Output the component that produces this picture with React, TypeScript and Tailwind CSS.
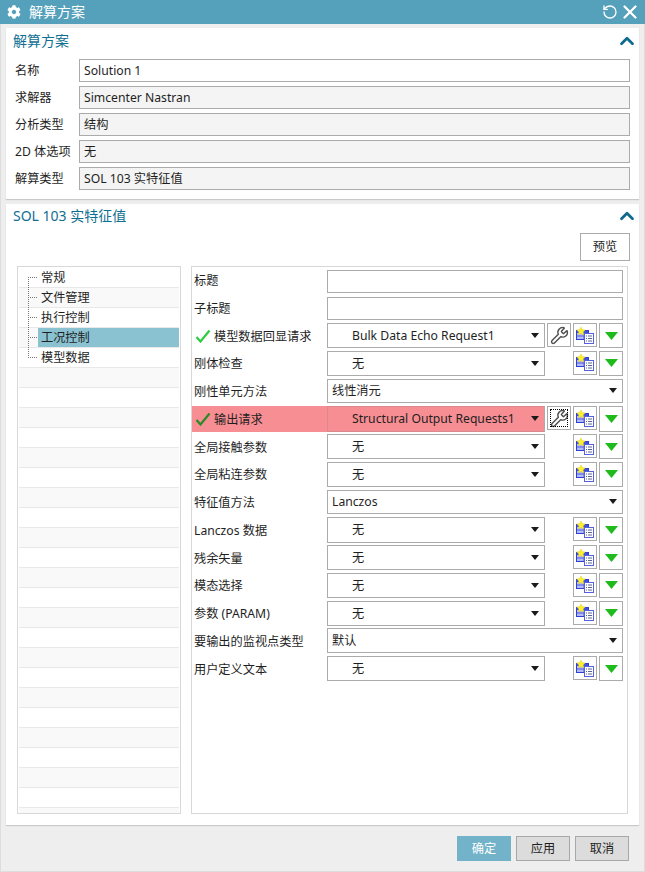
import type { ReactNode } from "react";
import { RotateCcw, X, ChevronUp, Wrench } from "lucide-react";
import { FaCog } from "react-icons/fa";

const font = "font-['Noto_Sans','Noto_Sans_CJK_SC',sans-serif]";

function Caret() {
  return (
    <svg width="8" height="5" viewBox="0 0 8 5" className="shrink-0">
      <path d="M0 0H8L4 5Z" fill="#1a1a1a" />
    </svg>
  );
}

function ItemIcon() {
  return (
    <svg width="18" height="17" viewBox="0 0 18 17">
      <rect x="0.500" y="3.500" width="12" height="9" fill="#b4bcf4" stroke="#2f3fd6" />
      <rect x="1" y="4" width="11" height="2" fill="#4050e0" />
      <path d="M1 9H12M8 6V12" stroke="#4f5ce4" strokeWidth="1" />
      <path d="M5 0l1.400 2.600 2.900.4-2.100 2 .5 2.900L5 6.500 2.300 7.900l.5-2.900-2.100-2 2.900-.4Z" fill="#faf02c" stroke="#d9c22a" strokeWidth="0.400" />
      <rect x="8.500" y="6.500" width="9" height="10" fill="#ffffff" stroke="#5560e2" />
      <path d="M10 9h1M12 9h4M10 11.500h1M12 11.500h4M10 14h1M12 14h4" stroke="#5a648c" strokeWidth="1" />
    </svg>
  );
}

function SquareBtn({ children, dotted, tall }: { children: ReactNode; dotted?: boolean; tall?: boolean }) {
  return (
    <div className={`relative ml-[2px] flex w-[24px] shrink-0 items-center justify-center border border-[#ababab] bg-white ${tall ? "h-[25.4px]" : "h-[24px]"}`}>
      {dotted && <div className="absolute inset-[2px] border border-dotted border-black" />}
      {children}
    </div>
  );
}

function Check({ dark }: { dark?: boolean }) {
  return (
    <svg width="16" height="14" viewBox="0 0 16 14" className="ml-[1px] mr-[3px] shrink-0">
      <path d="M1.500 8L5.500 12.500L14.500 1.500" fill="none" stroke={dark ? "#2a8a28" : "#2ecc40"} strokeWidth="2.200" />
    </svg>
  );
}

type Row = {
  label: string;
  value?: string;
  kind: "text" | "select" | "full";
  check?: boolean;
  wrench?: boolean;
  hot?: boolean;
};

const rows: Row[] = [
  { label: "标题", kind: "text" },
  { label: "子标题", kind: "text" },
  { label: "模型数据回显请求", value: "Bulk Data Echo Request1", kind: "select", check: true, wrench: true },
  { label: "刚体检查", value: "无", kind: "select" },
  { label: "刚性单元方法", value: "线性消元", kind: "full" },
  { label: "输出请求", value: "Structural Output Requests1", kind: "select", check: true, wrench: true, hot: true },
  { label: "全局接触参数", value: "无", kind: "select" },
  { label: "全局粘连参数", value: "无", kind: "select" },
  { label: "特征值方法", value: "Lanczos", kind: "full" },
  { label: "Lanczos 数据", value: "无", kind: "select" },
  { label: "残余矢量", value: "无", kind: "select" },
  { label: "模态选择", value: "无", kind: "select" },
  { label: "参数 (PARAM)", value: "无", kind: "select" },
  { label: "要输出的监视点类型", value: "默认", kind: "full" },
  { label: "用户定义文本", value: "无", kind: "select" },
];

const fields = [
  { label: "名称", value: "Solution 1", white: true },
  { label: "求解器", value: "Simcenter Nastran" },
  { label: "分析类型", value: "结构" },
  { label: "2D 体选项", value: "无" },
  { label: "解算类型", value: "SOL 103 实特征值" },
];

const tree = ["常规", "文件管理", "执行控制", "工况控制", "模型数据"];

function FormRow({ r }: { r: Row }) {
  return (
    <div className="flex h-[27.75px] shrink-0 items-start">
      <div className={`flex h-[25.4px] w-[135px] shrink-0 items-center pl-[2px] ${r.hot ? "bg-[#f78e93]" : ""}`}>
        {r.check && <Check dark={r.hot} />}
        <span className="whitespace-nowrap pt-[2px]">{r.label}</span>
      </div>
      {r.kind === "text" && <div className="mt-[2.200px] h-[23px] w-[296px] border border-[#ababab] bg-white" />}
      {r.kind === "full" && (
        <div className="flex h-[24.4px] w-[296px] items-center justify-between border border-[#ababab] bg-white pl-[4px] pr-[5px]">
          <span className="pt-[1px]">{r.value}</span>
          <Caret />
        </div>
      )}
      {r.kind === "select" && (
        <>
          <div className={`flex h-[25.4px] w-[218px] shrink-0 items-center justify-between border pl-[24px] pr-[5px] ${r.hot ? "border-[#d98a8e] border-r-[#ababab] bg-[#f78e93]" : "border-[#ababab] bg-white"}`}>
            <span className="whitespace-nowrap pt-[1px]">{r.value}</span>
            <Caret />
          </div>
          {r.wrench ? (
            <SquareBtn dotted={r.hot}>
              <Wrench size={19} strokeWidth={1.800} color="#505050" />
            </SquareBtn>
          ) : (
            <div className="ml-[2px] w-[24px] shrink-0" />
          )}
          <SquareBtn>
            <ItemIcon />
          </SquareBtn>
          <SquareBtn tall>
            <svg width="13" height="8" viewBox="0 0 13 8">
              <path d="M0 0H13L6.500 8Z" fill="#1fbb1c" />
            </svg>
          </SquareBtn>
        </>
      )}
    </div>
  );
}

export default function App() {
  return (
    <div className={`${font} flex h-[872px] w-[645px] flex-col overflow-hidden bg-[#eeeeee] text-[12.2px] leading-none text-[#1f1f1f]`}>
      <header className="flex h-[24px] shrink-0 items-center bg-[#55a0ba] pl-[7px] pr-[4px] text-white">
        <FaCog size={14} />
        <span className="ml-[8px] text-[14px]">解算方案</span>
        <RotateCcw size={16} strokeWidth={2} className="ml-auto" />
        <X size={22} strokeWidth={2.500} className="ml-[1px]" />
      </header>

      <div className="flex flex-1 flex-col border-x border-b border-[#dddddd]">
        <section className="mx-[5px] mt-[4px] h-[171px] shrink-0 bg-white pl-[7px] pr-[9px] shadow-[0_1px_1px_#c8c8c8]">
          <div className="flex h-[31px] items-center justify-between pb-[6px] text-[14px] text-[#0f6f92]">
            <span>解算方案</span>
            <ChevronUp size={22} strokeWidth={3} color="#0e6a8e" className="mr-[-8px]" />
          </div>
          <div className="flex flex-col gap-[4px]">
            {fields.map((f) => (
              <div key={f.label} className="flex h-[23px] items-center">
                <span className="w-[66px] shrink-0 pl-[2px] pt-[1px]">{f.label}</span>
                <div className={`flex h-full flex-1 items-center border border-[#ababab] pl-[4px] pt-[1px] ${f.white ? "bg-white" : "bg-[#f4f4f4]"}`}>
                  {f.value}
                </div>
              </div>
            ))}
          </div>
        </section>

        <section className="mx-[5px] mt-[5px] flex h-[621px] shrink-0 flex-col bg-white pl-[7px] pr-[9px] shadow-[0_1px_1px_#c8c8c8]">
          <div className="flex h-[24px] shrink-0 items-center justify-between text-[14px] text-[#0f6f92]">
            <span>SOL 103 实特征值</span>
            <ChevronUp size={22} strokeWidth={3} color="#0e6a8e" className="mr-[-8px]" />
          </div>
          <div className="mt-[5px] flex h-[28px] shrink-0 justify-end">
            <div className="flex w-[50px] items-center justify-center border border-[#ababab] bg-white">预览</div>
          </div>
          <div className="ml-[4px] mt-[5px] flex h-[548px] shrink-0">
            <div className="relative flex h-full w-[164px] shrink-0 flex-col overflow-hidden border border-[#d8d8d8] p-[1px]">
              {Array.from({ length: 28 }).map((_, i) => (
                <div key={i} className={`flex h-[20px] shrink-0 items-center border-b border-[#e8e8e8] pl-[19px] ${i % 2 ? "bg-[#f9f9f9]" : "bg-white"}`}>
                  {tree[i] && (
                    <span className={`flex h-full flex-1 items-center pl-[3px] pt-[1px] ${i === 3 ? "bg-[#8ac2d2]" : ""}`}>{tree[i]}</span>
                  )}
                </div>
              ))}
              <div className="absolute left-[10px] top-[10px] h-[81px] border-l border-dotted border-[#777777]" />
              {tree.map((t, i) => (
                <div key={t} className="absolute left-[10px] w-[9px] border-t border-dotted border-[#777777]" style={{ top: 10 + i * 20 }} />
              ))}
            </div>
            <div className="ml-[10px] flex h-full w-[437px] flex-col border border-[#d8d8d8] pt-[0.500px]">
              {rows.map((r) => (
                <FormRow key={r.label} r={r} />
              ))}
            </div>
          </div>
        </section>

        <footer className="flex flex-1 items-start justify-end gap-[5px] pr-[15px] pt-[11px]">
          <div className="flex h-[25px] w-[54px] items-center justify-center bg-[#72b3c9] pt-[1px] text-white">确定</div>
          <div className="flex h-[25px] w-[54px] items-center justify-center border border-[#a8a8a8] bg-[#dcdcdc] pt-[1px]">应用</div>
          <div className="flex h-[25px] w-[54px] items-center justify-center border border-[#a8a8a8] bg-[#dcdcdc] pt-[1px]">取消</div>
        </footer>
      </div>
    </div>
  );
}
